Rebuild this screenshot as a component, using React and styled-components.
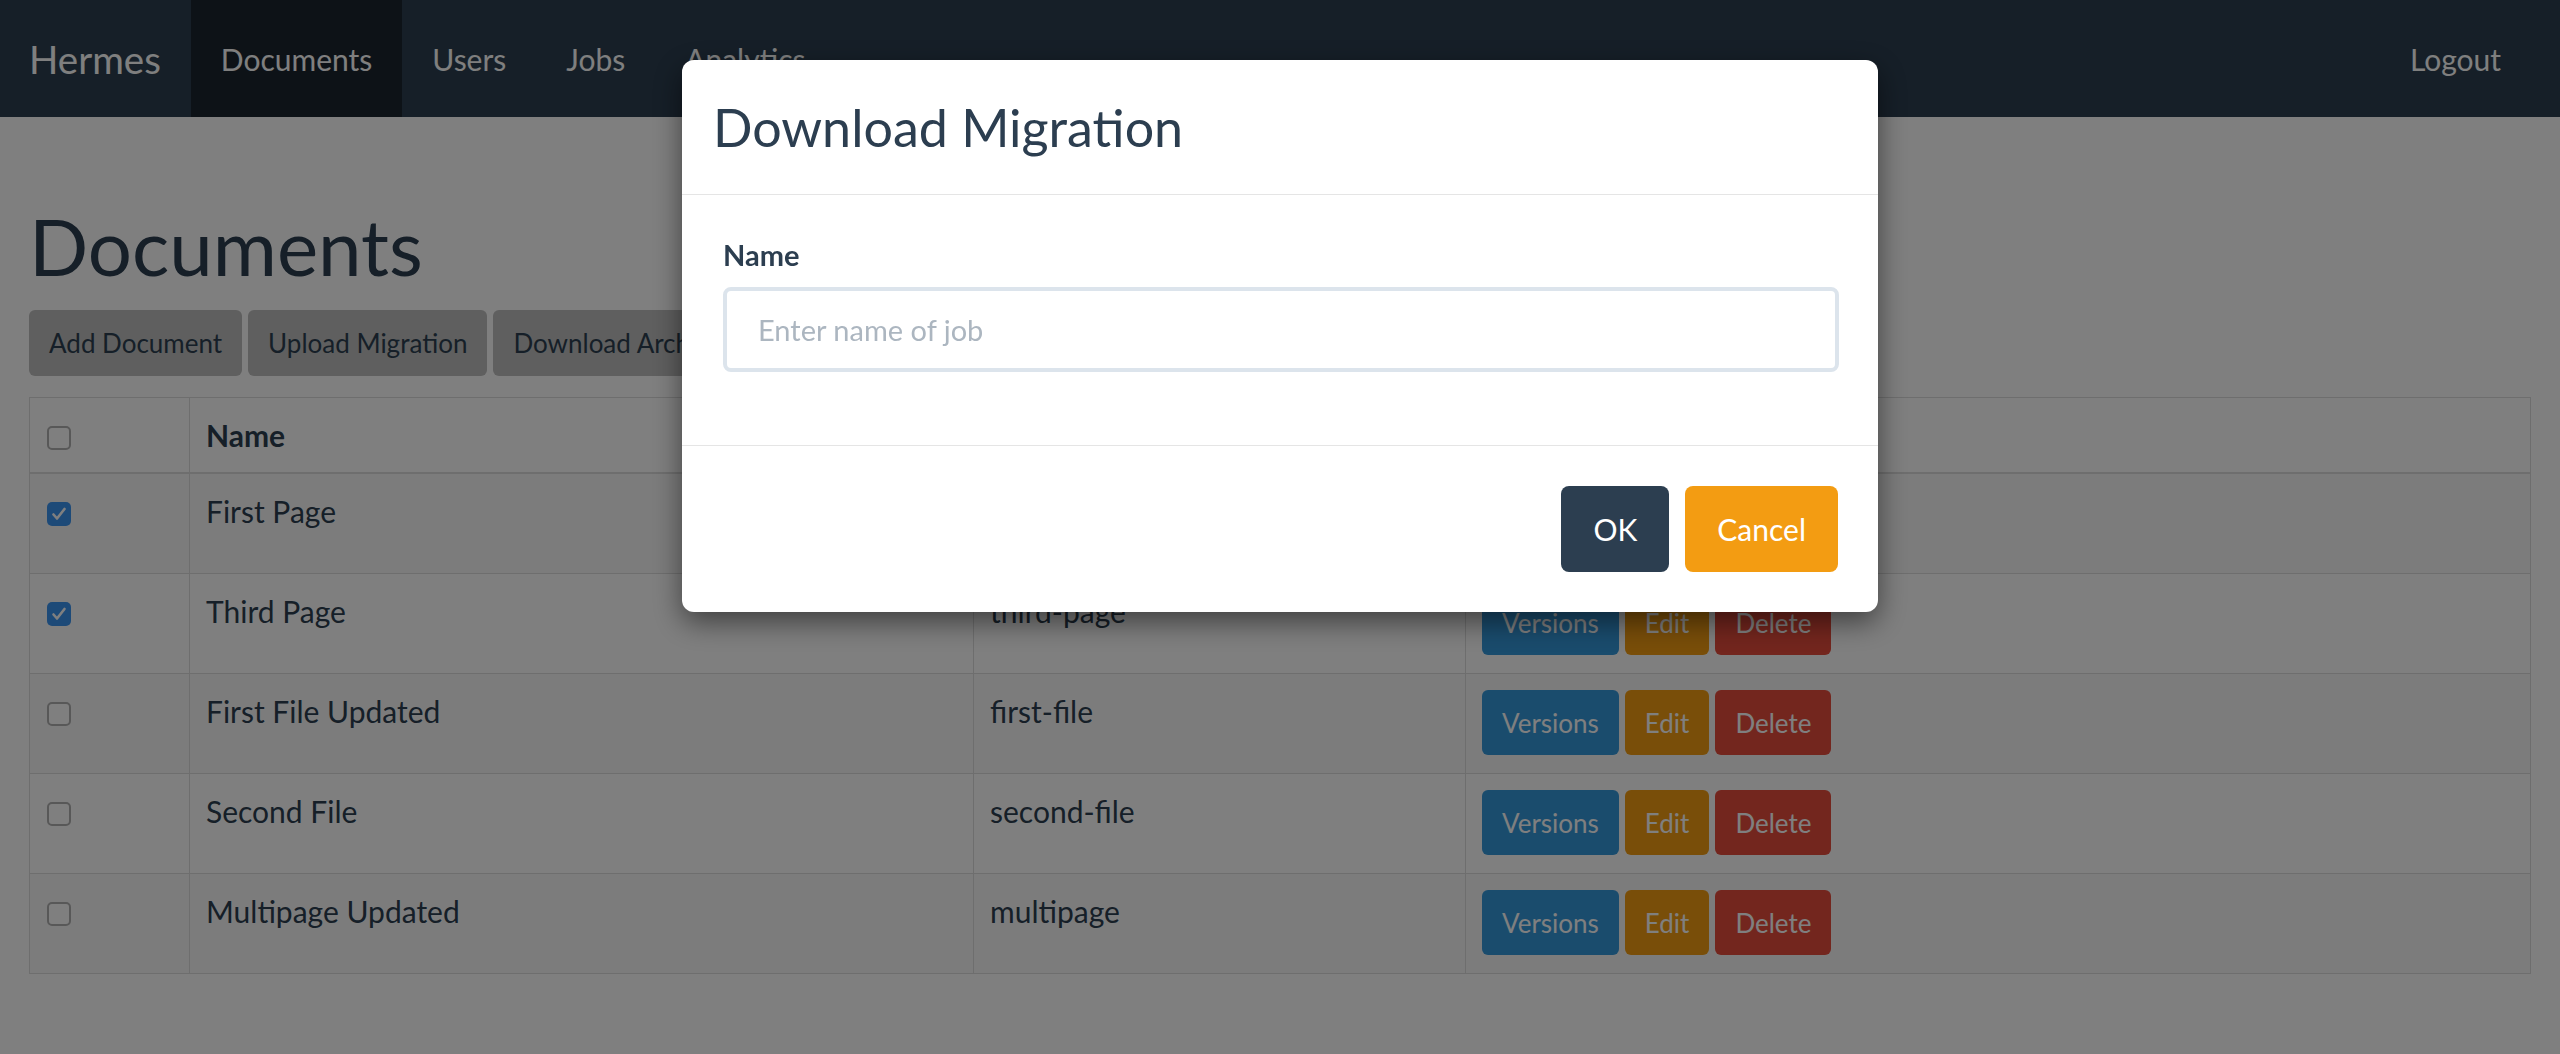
import React from 'react';
import styled, { createGlobalStyle } from 'styled-components';

const GlobalStyle = createGlobalStyle`
  * { box-sizing: border-box; }
  body {
    margin: 0;
    background: #ffffff;
    font-family: Lato, 'Open Sans', sans-serif;
    color: #2c3e50;
  }
`;

const Nav = styled.nav`
  height: 117px;
  display: flex;
  align-items: stretch;
  background-color: #2c3e50;
  padding-right: 29px;
`;

const Brand = styled.a`
  display: flex;
  align-items: center;
  padding: 0 30px 0 29px;
  font-size: 38.5px;
  color: #ffffff;
  text-decoration: none;
`;

const NavLink = styled.a`
  display: flex;
  align-items: center;
  padding: 0 30px;
  font-size: 30px;
  color: #ffffff;
  text-decoration: none;
  background-color: ${p => (p.$active ? '#1a242f' : 'transparent')};
  margin-left: ${p => (p.$right ? 'auto' : '0')};
`;

const Page = styled.main`
  padding: 0 29px;
`;

const Title = styled.h1`
  margin: 87px 0 22px;
  font-size: 78px;
  line-height: 84px;
  font-weight: 400;
  color: #2c3e50;
`;

const Toolbar = styled.div`
  display: flex;
  gap: 6px;
  margin-bottom: 21px;
`;

const ToolButton = styled.button`
  height: 66px;
  padding: 0 20px;
  border: none;
  border-radius: 6px;
  background: #bebebe;
  color: #2c3e50;
  font-family: inherit;
  font-size: 26px;
`;

const Table = styled.table`
  width: 100%;
  border-collapse: collapse;
  table-layout: fixed;
  font-size: 30px;
  line-height: 42px;
`;

const Th = styled.th`
  text-align: left;
  vertical-align: top;
  padding: 16px;
  border: 1px solid #dddddd;
  border-bottom-width: 2px;
  font-weight: 700;
`;

const Row = styled.tr`
  background-color: ${p => (p.$odd ? '#f9f9f9' : '#ffffff')};
`;

const Td = styled.td`
  vertical-align: top;
  padding: 16px;
  border: 1px solid #dddddd;
`;

const Check = styled.span`
  display: block;
  width: 24px;
  height: 24px;
  margin: 12px 0 0 1px;
  border-radius: 5px;
  border: ${p => (p.$checked ? 'none' : '2px solid #b0b0b0')};
  background: ${p => (p.$checked ? '#3b94f0' : '#ffffff')};
  svg { display: block; }
`;

const Actions = styled.div`
  display: flex;
  gap: 6px;
  height: 67px;
`;

const palette = {
  info: '#3498db',
  warning: '#f39c12',
  danger: '#e74c3c',
};

const ActionButton = styled.button`
  height: 65px;
  padding: 0 20px;
  border: none;
  border-radius: 6px;
  background: ${p => palette[p.$kind]};
  color: #ffffff;
  font-family: inherit;
  font-size: 26px;
`;

const Backdrop = styled.div`
  position: fixed;
  inset: 0;
  background: rgba(0, 0, 0, 0.5);
`;

const Dialog = styled.div`
  position: fixed;
  top: 60px;
  left: 50%;
  width: 1196px;
  margin-left: -598px;
  background: #ffffff;
  border-radius: 12px;
  box-shadow: 0 10px 29px rgba(0, 0, 0, 0.5);
`;

const DialogHeader = styled.div`
  padding: 29px 31px;
  border-bottom: 1px solid #e5e5e5;
`;

const DialogTitle = styled.h3`
  margin: 0;
  font-size: 52px;
  line-height: 76px;
  font-weight: 400;
  color: #2c3e50;
`;

const DialogBody = styled.div`
  padding: 39px 39px 39px 41px;
`;

const Label = styled.label`
  display: block;
  font-size: 29px;
  line-height: 42px;
  font-weight: 700;
  margin-bottom: 11px;
`;

const Input = styled.input`
  display: block;
  width: 100%;
  height: 85px;
  padding: 0 31px;
  margin-bottom: 34px;
  border: 4px solid #dce4ec;
  border-radius: 8px;
  font-family: inherit;
  font-size: 29px;
  color: #2c3e50;
  outline: none;
  &::placeholder { color: #acb6c0; }
`;

const DialogFooter = styled.div`
  display: flex;
  justify-content: flex-end;
  gap: 16px;
  padding: 40px;
  border-top: 1px solid #e5e5e5;
`;

const DialogButton = styled.button`
  height: 86px;
  padding: 0 32px;
  border: none;
  border-radius: 8px;
  background: ${p => (p.$primary ? '#2c3e50' : '#f39c12')};
  color: #ffffff;
  font-family: inherit;
  font-size: 30px;
`;

const rows = [
  { name: 'First Page', slug: 'first-page', checked: true },
  { name: 'Third Page', slug: 'third-page', checked: true },
  { name: 'First File Updated', slug: 'first-file', checked: false },
  { name: 'Second File', slug: 'second-file', checked: false },
  { name: 'Multipage Updated', slug: 'multipage', checked: false },
];

function CheckBox({ checked }) {
  return (
    <Check $checked={checked}>
      {checked && (
        <svg width="24" height="24" viewBox="0 0 24 24">
          <path d="M6.5 12.5l3.5 4 7.5-9.5" fill="none" stroke="#ffffff" strokeWidth="2.6" strokeLinecap="round" strokeLinejoin="round" />
        </svg>
      )}
    </Check>
  );
}

export default function App() {
  return (
    <>
      <GlobalStyle />
      <Nav>
        <Brand href="#">Hermes</Brand>
        <NavLink href="#" $active>Documents</NavLink>
        <NavLink href="#">Users</NavLink>
        <NavLink href="#">Jobs</NavLink>
        <NavLink href="#">Analytics</NavLink>
        <NavLink href="#" $right>Logout</NavLink>
      </Nav>
      <Page>
        <Title>Documents</Title>
        <Toolbar>
          <ToolButton>Add Document</ToolButton>
          <ToolButton>Upload Migration</ToolButton>
          <ToolButton>Download Archive</ToolButton>
        </Toolbar>
        <Table>
          <colgroup>
            <col style={{ width: 160 }} />
            <col style={{ width: 784 }} />
            <col style={{ width: 492 }} />
            <col />
          </colgroup>
          <thead>
            <tr>
              <Th><CheckBox /></Th>
              <Th>Name</Th>
              <Th>Slug</Th>
              <Th>Actions</Th>
            </tr>
          </thead>
          <tbody>
            {rows.map((r, i) => (
              <Row key={r.slug} $odd={i % 2 === 0}>
                <Td><CheckBox checked={r.checked} /></Td>
                <Td>{r.name}</Td>
                <Td>{r.slug}</Td>
                <Td>
                  <Actions>
                    <ActionButton $kind="info">Versions</ActionButton>
                    <ActionButton $kind="warning">Edit</ActionButton>
                    <ActionButton $kind="danger">Delete</ActionButton>
                  </Actions>
                </Td>
              </Row>
            ))}
          </tbody>
        </Table>
      </Page>
      <Backdrop />
      <Dialog>
        <DialogHeader>
          <DialogTitle>Download Migration</DialogTitle>
        </DialogHeader>
        <DialogBody>
          <Label>Name</Label>
          <Input placeholder="Enter name of job" />
        </DialogBody>
        <DialogFooter>
          <DialogButton $primary>OK</DialogButton>
          <DialogButton>Cancel</DialogButton>
        </DialogFooter>
      </Dialog>
    </>
  );
}
